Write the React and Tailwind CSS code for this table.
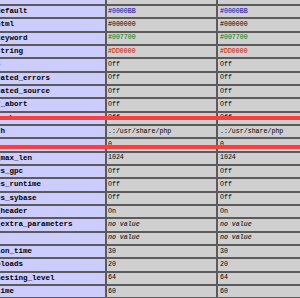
const rows = [
    { name: "highlight.comment", value: "#FF8000", color: "text-[#ff8000]" },
    { name: "highlight.default", value: "#0000BB", color: "text-[#0000bb]" },
    { name: "highlight.html", value: "#000000", color: "text-[#000000]" },
    { name: "highlight.keyword", value: "#007700", color: "text-[#007700]" },
    { name: "highlight.string", value: "#DD0000", color: "text-[#dd0000]" },
    { name: "html_errors", value: "Off" },
    { name: "ignore_repeated_errors", value: "Off" },
    { name: "ignore_repeated_source", value: "Off" },
    { name: "ignore_user_abort", value: "Off" },
    { name: "implicit_flush", value: "Off" },
    { name: "include_path", value: ".:/usr/share/php" },
    { name: "log_errors", value: "0" },
    { name: "log_errors_max_len", value: "1024" },
    { name: "magic_quotes_gpc", value: "Off" },
    { name: "magic_quotes_runtime", value: "Off" },
    { name: "magic_quotes_sybase", value: "Off" },
    { name: "mail.add_x_header", value: "On" },
    { name: "mail.force_extra_parameters", value: "no value", empty: true },
    { name: "mail.log", value: "no value", empty: true },
    { name: "max_execution_time", value: "30" },
    { name: "max_file_uploads", value: "20" },
    { name: "max_input_nesting_level", value: "64" },
    { name: "max_input_time", value: "60" },
];

function Value({ row }) {
    if (row.empty) {
        return <i className="italic font-bold text-[#3a3a3a]">{row.value}</i>;
    }
    return <span className={row.color || "text-black"}>{row.value}</span>;
}

export default function App() {
    return (
        <div className="relative w-[300px] h-[298px] overflow-hidden bg-[#cccccc] font-['Liberation_Mono',monospace]">
            {/* ini directives table */}
            <div className="mt-[-7.33px] flex flex-col">
                {rows.map((row) => (
                    <div key={row.name} className="flex h-[13.33px] border-b-2 border-[#5b5b5b]">
                        <div className="w-[105px] shrink-0 flex items-center overflow-hidden bg-[#ccccff]">
                            <span className="ml-[-49px] whitespace-nowrap text-[7.5px] font-bold text-black">
                                {row.name}
                            </span>
                        </div>
                        <div className="w-[111px] shrink-0 flex items-center overflow-hidden whitespace-nowrap border-l-2 border-[#5b5b5b] bg-[#cfcfcf] pl-[1px] text-[6.6px]">
                            <Value row={row} />
                        </div>
                        <div className="flex-1 flex items-center overflow-hidden whitespace-nowrap border-l-2 border-[#5b5b5b] bg-[#cfcfcf] pl-[2px] text-[6.6px]">
                            <Value row={row} />
                        </div>
                    </div>
                ))}
            </div>

            {/* red cut marks drawn over the table */}
            <div className="absolute left-0 right-0 top-[116px] h-[4px] bg-[#ff3d3d]" />
            <div className="absolute left-0 right-0 top-[145px] h-[4px] bg-[#ff3d3d]" />
        </div>
    );
}
